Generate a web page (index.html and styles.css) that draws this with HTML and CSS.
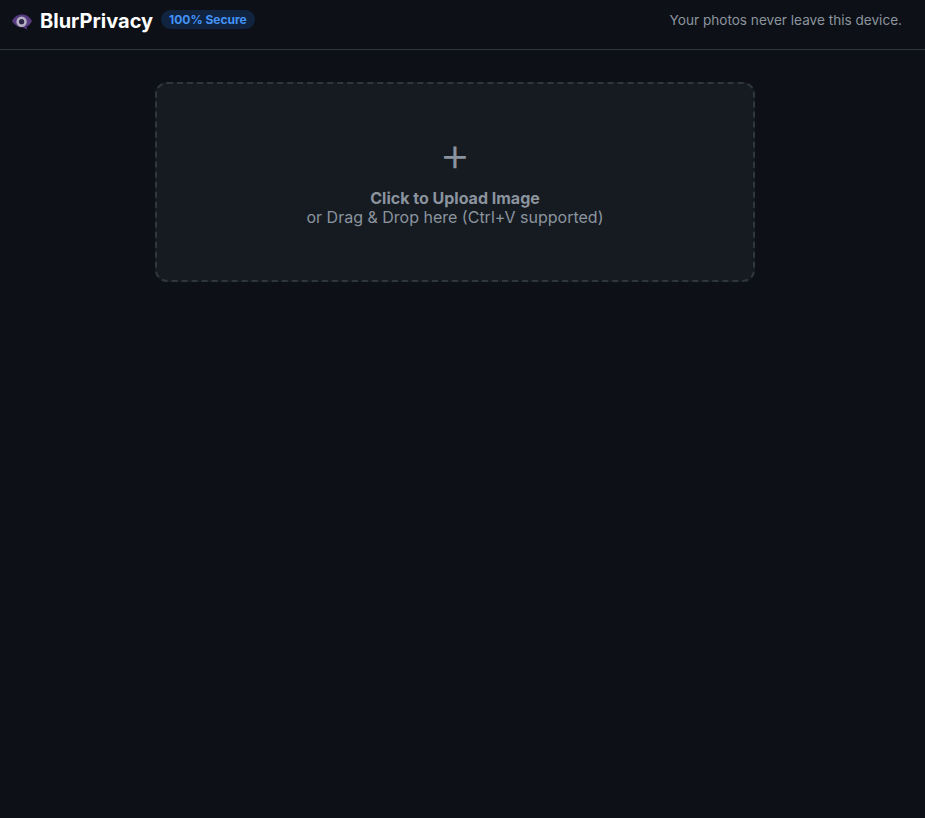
FILE: index.html
```html
<!DOCTYPE html>
<html lang="en">
<head>
<meta charset="utf-8">
<title>BlurPrivacy</title>
<link rel="stylesheet" href="styles.css">
</head>
<body>
<header class="topbar">
  <div class="brand">
    <svg class="logo" width="20" height="18" viewBox="0 0 20 18" aria-hidden="true">
      <path class="logo-eye" d="M0 9C2.500 4.500 6 2.500 10 2.500S17.500 4.500 20 9c-1.500 3-3.500 5-5.500 5.800l.8 3-4-2.400C7 15.800 2.500 13.500 0 9z"/>
      <circle class="logo-ring" cx="9.600" cy="9.700" r="3.900"/>
    </svg>
    <span class="brand-name">BlurPrivacy</span>
    <span class="badge">100% Secure</span>
  </div>
  <p class="note">Your photos never leave this device.</p>
</header>
<main class="content">
  <div class="dropzone">
    <div class="plus">+</div>
    <div class="drop-title">Click to Upload Image</div>
    <div class="drop-sub">or Drag &amp; Drop here (Ctrl+V supported)</div>
  </div>
</main>
</body>
</html>
```

FILE: styles.css
```css
* { box-sizing: border-box; }
html, body { margin: 0; height: 100%; }
body {
  background: #0d1117;
  color: #8b949e;
  font-family: Inter, "Liberation Sans", sans-serif;
}
.topbar {
  display: flex;
  justify-content: space-between;
  align-items: center;
  height: 50px;
  padding: 0 23px 8px 12px;
  border-bottom: 1px solid #30363d;
}
.brand { display: flex; align-items: center; margin-top: 1px; }
.logo { display: block; margin-right: 8px; }
.logo-eye { fill: #573a80; }
.logo-ring { fill: #2e2648; stroke: #b5b0c2; stroke-width: 2.600; }
.brand-name {
  color: #fff;
  font-size: 20px;
  font-weight: 700;
  margin-right: 8px;
}
.badge {
  background: #10233f;
  color: #4493f8;
  font-size: 12px;
  font-weight: 700;
  line-height: 15px;
  padding: 2px 8px;
  border-radius: 10px;
  margin-top: -3px;
}
.note { margin: -1px 0 0; font-size: 13.6px; }
.content { display: flex; justify-content: center; padding: 32px 15px 0 0; }
.dropzone {
  width: 600px;
  height: 200px;
  padding-bottom: 13px;
  background: #161b22;
  border: 2px dashed #30363d;
  border-radius: 12px;
  display: flex;
  flex-direction: column;
  align-items: center;
  justify-content: center;
  font-size: 16px;
  line-height: 19px;
}
.plus { font-size: 48px; line-height: 58px; margin-bottom: 6px; color: #8b949e; font-weight: 350; }
.drop-title { font-weight: 700; }
.drop-sub { font-weight: 400; }
```
